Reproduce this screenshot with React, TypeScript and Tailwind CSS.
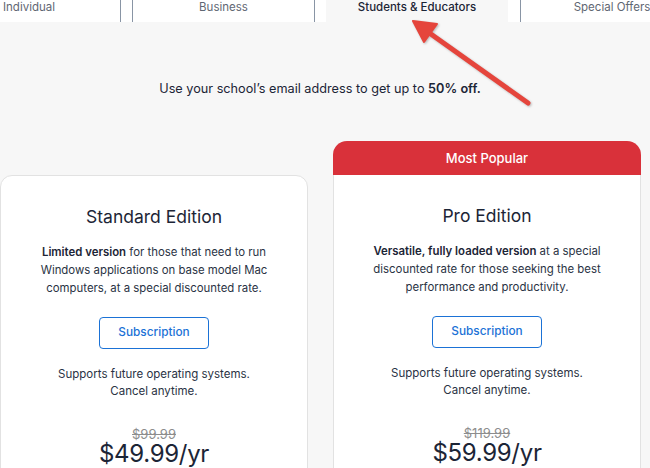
import React from "react";

const font = { fontFamily: "Inter, 'Noto Sans', sans-serif" };

function Card({
  title,
  lead,
  rest,
  oldPrice,
  price,
  popular,
}: {
  title: string;
  lead: string;
  rest: string;
  oldPrice: string;
  price: string;
  popular?: boolean;
}) {
  return (
    <div className="flex w-[308px] shrink-0 flex-col">
      {popular && (
        <div className="flex h-[34px] items-center justify-center rounded-t-[14px] bg-[#d9313a] pt-[1px] text-[13px] font-medium text-white">
          Most Popular
        </div>
      )}
      <div
        className={
          "flex h-[400px] flex-col items-center bg-white pt-[29px] text-[#1c2536] " +
          (popular
            ? "border-x border-[#e2e2e2]"
            : "rounded-t-[12px] border border-[#e2e2e2]")
        }
      >
        <div className="text-[17.5px] leading-[24px]">{title}</div>
        <p className="mt-[14px] w-[250px] text-center text-[11.4px] leading-[18px] text-[#2a3344]">
          <span className="font-semibold text-[#1c2536]">{lead}</span> {rest}
        </p>
        <button className="mt-[20px] h-[32px] w-[110px] rounded-[4px] border border-[#1b72d6] text-[11.8px] font-medium text-[#1b72d6]">
          Subscription
        </button>
        <p className="mt-[17px] text-center text-[11.5px] leading-[17px] text-[#2a3344]">
          Supports future operating systems.
          <br />
          Cancel anytime.
        </p>
        <div className="mt-[25px] text-[13px] leading-[18px] text-[#8d8d8d] line-through">
          {oldPrice}
        </div>
        <div className="-mt-[2px] text-[24px] font-normal leading-[26px] tracking-[-0.3px] text-[#1c2536]">
          {price}
        </div>
      </div>
    </div>
  );
}

export default function App() {
  return (
    <div
      className="relative h-[468px] w-[650px] overflow-hidden bg-[#f7f7f7]"
      style={font}
    >
      <div className="flex h-[22px] bg-white text-[11.5px] leading-[15px] text-[#5f6773]">
        <div className="-ml-[62px] flex w-[183px] shrink-0 justify-center border-r border-[#8995a5]">
          Individual
        </div>
        <div className="ml-[11px] flex w-[183px] shrink-0 justify-center border-x border-[#8995a5]">
          Business
        </div>
        <div className="ml-[11px] flex w-[182px] shrink-0 justify-center bg-[#f7f7f7] font-medium text-[#1c2536]">
          Students &amp; Educators
        </div>
        <div className="ml-[12px] flex w-[183px] shrink-0 justify-center border-l border-[#8995a5]">
          Special Offers
        </div>
      </div>

      <div className="mt-[57px] flex justify-center pr-[10px] text-[12.7px] leading-[20px] text-[#1c2536]">
        <span>
          Use your school’s email address to get up to{" "}
          <span className="font-semibold">50% off.</span>
        </span>
      </div>

      <div className="mt-[42px] flex items-start gap-[25px]">
        <div className="mt-[34px]">
          <Card
            title="Standard Edition"
            lead="Limited version"
            rest="for those that need to run Windows applications on base model Mac computers, at a special discounted rate."
            oldPrice="$99.99"
            price="$49.99/yr"
          />
        </div>
        <Card
          popular
          title="Pro Edition"
          lead="Versatile, fully loaded version"
          rest="at a special discounted rate for those seeking the best performance and productivity."
          oldPrice="$119.99"
          price="$59.99/yr"
        />
      </div>

      <svg
        className="pointer-events-none absolute left-0 top-0"
        width="650"
        height="468"
        viewBox="0 0 650 468"
      >
        <g style={{ filter: "drop-shadow(1px 1px 1px rgba(0,0,0,0.25))" }}>
          <line
            x1="528"
            y1="103"
            x2="428"
            y2="32"
            stroke="#e5453c"
            strokeWidth="5"
            strokeLinecap="round"
          />
          <polygon
            points="413,21 437,24 424,42"
            fill="#e5453c"
            stroke="#e5453c"
            strokeWidth="2"
            strokeLinejoin="round"
          />
        </g>
      </svg>
    </div>
  );
}
